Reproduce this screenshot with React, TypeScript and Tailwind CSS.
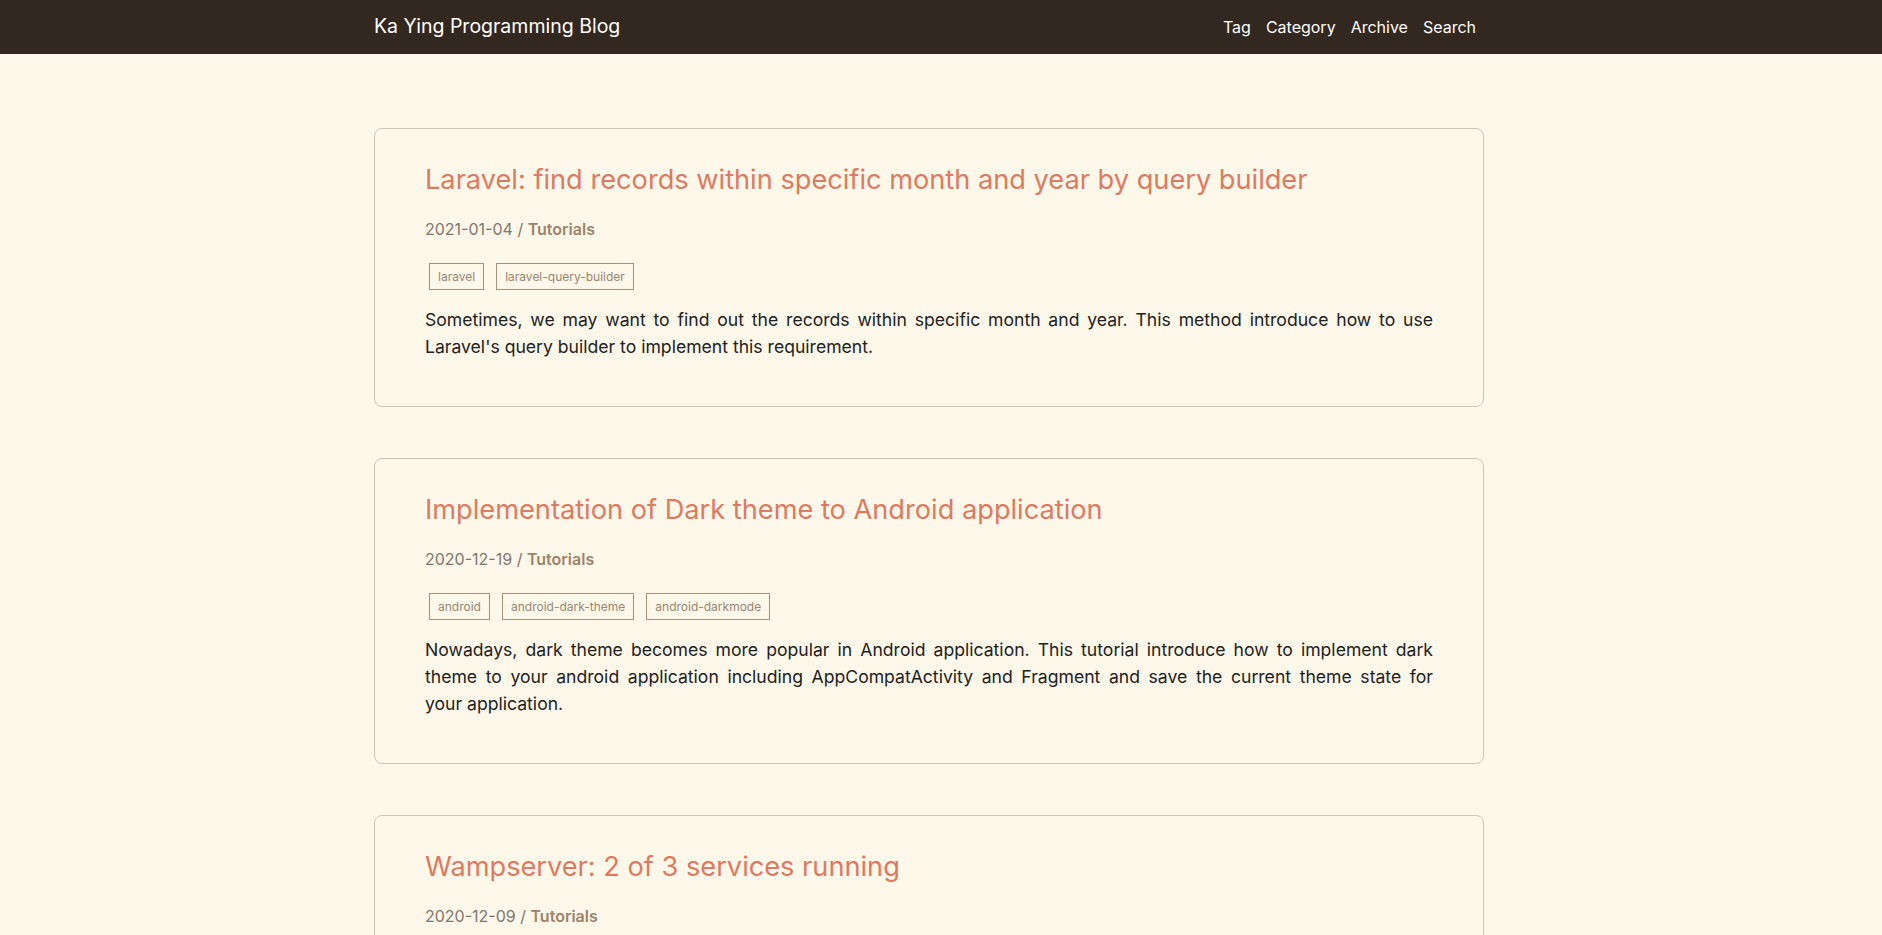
import React from "react";

type Post = {
  title: string;
  date: string;
  category: string;
  tags: string[];
  // excerpt lines, as the original layout wraps them
  excerpt: string[];
};

const posts: Post[] = [
  {
    title: "Laravel: find records within specific month and year by query builder",
    date: "2021-01-04",
    category: "Tutorials",
    tags: ["laravel", "laravel-query-builder"],
    excerpt: [
      "Sometimes, we may want to find out the records within specific month and year. This method introduce how to use",
      "Laravel's query builder to implement this requirement.",
    ],
  },
  {
    title: "Implementation of Dark theme to Android application",
    date: "2020-12-19",
    category: "Tutorials",
    tags: ["android", "android-dark-theme", "android-darkmode"],
    excerpt: [
      "Nowadays, dark theme becomes more popular in Android application. This tutorial introduce how to implement dark",
      "theme to your android application including AppCompatActivity and Fragment and save the current theme state for",
      "your application.",
    ],
  },
  {
    title: "Wampserver: 2 of 3 services running",
    date: "2020-12-09",
    category: "Tutorials",
    tags: ["wampserver", "apache", "mysql"],
    excerpt: [
      "When you start Wampserver, the icon may stay orange and show that only 2 of 3 services are running. This post",
      "explains how to find out which port is in use and fix it.",
    ],
  },
];

function PostCard({ post }: { post: Post }) {
  return (
    <article className="rounded-lg border border-[#cdc6b6] px-[50px] pt-[34px] pb-[46px]">
      <h2 className="text-[27.2px] leading-[34px] font-normal text-[#df7a60]">
        <a href="#">{post.title}</a>
      </h2>
      <div className="mt-[20px] text-[16px] leading-[24px] text-[#7f776c]">
        {post.date} / <a href="#" className="font-semibold text-[#a0826a]">{post.category}</a>
      </div>
      <div className="mt-[22px] flex gap-[12px] pl-[4px]">
        {post.tags.map((tag) => (
          <a
            key={tag}
            href="#"
            className="flex h-[27px] items-center border border-[#a8927c] px-[8px] text-[12px] text-[#9c8670]"
          >
            {tag}
          </a>
        ))}
      </div>
      <p className="mt-[16px] text-justify text-[17.6px] leading-[27px] text-[#212121]">
        {post.excerpt.map((line, i) => (
          <span
            key={i}
            className={i < post.excerpt.length - 1 ? "block [text-align-last:justify]" : "block"}
          >
            {line}
          </span>
        ))}
      </p>
    </article>
  );
}

export default function App() {
  return (
    <div className="min-h-screen bg-[#fef8eb] font-['Inter',sans-serif]">
      <header className="bg-[#33281f]">
        <div className="mx-auto flex h-[54px] w-[1134px] items-center justify-between pr-[24px]">
          <a href="#" className="text-[19.5px] text-white">
            Ka Ying Programming Blog
          </a>
          <nav className="flex gap-[15px] pr-[8px] text-[16px] text-white">
            <a href="#">Tag</a>
            <a href="#">Category</a>
            <a href="#">Archive</a>
            <a href="#">Search</a>
          </nav>
        </div>
      </header>
      <main className="mx-auto flex w-[1134px] flex-col gap-[51px] pr-[24px] pt-[74px] pb-[60px]">
        {posts.map((post) => (
          <PostCard key={post.title} post={post} />
        ))}
      </main>
    </div>
  );
}
